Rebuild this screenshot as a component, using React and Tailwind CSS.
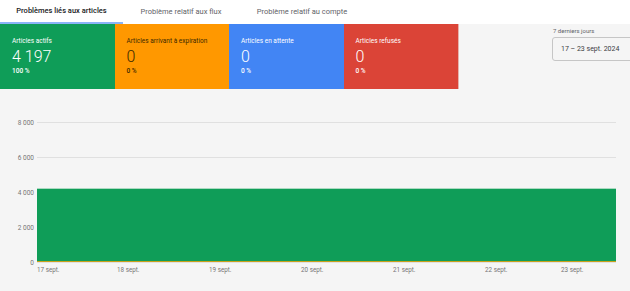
import React from "react";

const CARDS = [
  { title: "Articles actifs", value: "4 197", pct: "100 %", bg: "bg-[#0f9d58]", text: "text-white" },
  { title: "Articles arrivant à expiration", value: "0", pct: "0 %", bg: "bg-[#ff9800]", text: "text-[#3c2a00]" },
  { title: "Articles en attente", value: "0", pct: "0 %", bg: "bg-[#4285f4]", text: "text-white" },
  { title: "Articles refusés", value: "0", pct: "0 %", bg: "bg-[#db4437]", text: "text-white" },
];

const Y_TICKS = [
  { label: "8 000", y: 27 },
  { label: "6 000", y: 62 },
  { label: "4 000", y: 97 },
  { label: "2 000", y: 132 },
  { label: "0", y: 167 },
];

const X_TICKS = [
  { label: "17 sept.", x: 37 },
  { label: "18 sept.", x: 117 },
  { label: "19 sept.", x: 209 },
  { label: "20 sept.", x: 301 },
  { label: "21 sept.", x: 393 },
  { label: "22 sept.", x: 485 },
  { label: "23 sept.", x: 561 },
];

function Tabs() {
  return (
    <div className="flex h-6 bg-white text-[7.5px] text-[#5f6368]">
      <div className="w-[123px] flex items-center justify-center border-b-2 border-[#8ab4f8] text-[#202124] font-medium">
        Problèmes liés aux articles
      </div>
      <div className="w-[116px] flex items-center justify-center">Problème relatif aux flux</div>
      <div className="w-[126px] flex items-center justify-center">Problème relatif au compte</div>
    </div>
  );
}

function Card({ c }) {
  return (
    <div className={`w-[114.5px] h-[65px] px-3 pt-[13px] ${c.bg} ${c.text}`}>
      <div className="text-[6.5px] leading-[8px]">{c.title}</div>
      <div className="text-[16px] font-light leading-[18px] mt-[3px]">{c.value}</div>
      <div className="text-[6.5px] font-medium leading-[8px] mt-[1px]">{c.pct}</div>
    </div>
  );
}

function Chart() {
  return (
    <svg width="630" height="196" className="block" style={{ fontFamily: "Roboto, sans-serif" }}>
      {Y_TICKS.map((t) => (
        <g key={t.label}>
          <line x1="37" x2="616" y1={t.y + 0.5} y2={t.y + 0.5} stroke="#e0e0e0" strokeWidth="1" />
          <text x="34" y={t.y + 2.5} textAnchor="end" fontSize="6.5" fill="#757575">
            {t.label}
          </text>
        </g>
      ))}
      <rect x="37" y="93.5" width="579" height="73.5" fill="#0f9d58" />
      <line x1="37" x2="616" y1="93.5" y2="93.5" stroke="#c8e6d4" strokeWidth="0.6" />
      <line x1="37" x2="616" y1="166.5" y2="166.5" stroke="#c8a21a" strokeWidth="1" />
      {X_TICKS.map((t) => (
        <text key={t.label} x={t.x} y="176.5" fontSize="6.3" fill="#757575">
          {t.label}
        </text>
      ))}
    </svg>
  );
}

export default function App() {
  return (
    <div className="w-[630px] h-[291px] overflow-hidden bg-[#f5f5f5]" style={{ fontFamily: "Roboto, 'Noto Sans', sans-serif" }}>
      <Tabs />
      <div className="flex">
        <div className="flex border-r border-[#e6b3ad]">
          {CARDS.map((c) => (
            <Card key={c.title} c={c} />
          ))}
        </div>
        <div className="ml-[93px] pt-[3px] shrink-0">
          <div className="text-[6px] text-[#5f6368] leading-[8px] pl-[1px]">7 derniers jours</div>
          <div className="mt-[2px] w-[90px] h-[24px] border border-[#c6c6c6] rounded-[3px] flex items-center pl-2 text-[7px] text-[#3c4043]">
            <span>17 – 23 sept. 2024</span>
            <svg width="6" height="4" className="ml-[11px]">
              <path d="M0 0 L6 0 L3 3 Z" fill="#5f6368" />
            </svg>
          </div>
        </div>
      </div>
      <div className="mt-[6px]">
        <Chart />
      </div>
    </div>
  );
}
